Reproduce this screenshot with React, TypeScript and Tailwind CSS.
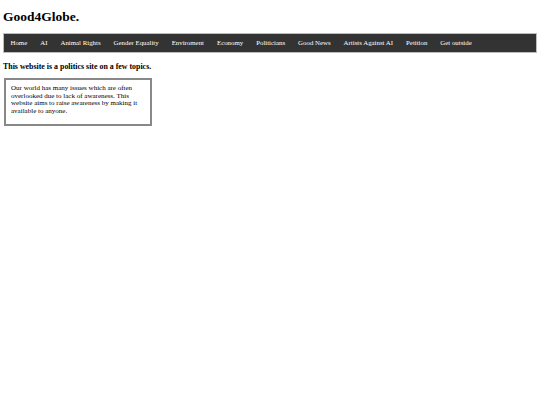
import React from 'react';

const navItems: string[] = [
  'Home',
  'AI',
  'Animal Rights',
  'Gender Equality',
  'Enviroment',
  'Economy',
  'Politicians',
  'Good News',
  'Artists Against AI',
  'Petition',
  'Get outside',
];

const App: React.FC = () => {
  return (
    <div className="min-h-[405px] bg-white text-black px-[3px]" style={{ fontFamily: '"Liberation Serif", "Times New Roman", serif' }}>
      <h1 className="pt-[8px] text-[13.5px] leading-[17px] font-bold">Good4Globe.</h1>

      <nav className="mt-[8px] h-[20px] bg-[#333333] border border-[#bdbdbd] flex items-center">
        {navItems.map((item) => (
          <a key={item} href="#" className="px-[6.5px] text-[6.85px] text-white whitespace-nowrap">
            {item}
          </a>
        ))}
      </nav>

      <h3 className="mt-[9px] text-[7.9px] leading-[10px] font-bold">This website is a politics site on a few topics.</h3>

      <div className="mt-[6px] ml-[1px] w-[148px] border-2 border-[#888888] pl-[5px] pr-[12px] pt-[5px] pb-[8px]">
        <p className="text-[7px] leading-[7.7px]">
          Our world has many issues which are often overlooked due to lack of awareness. This website aims to raise awareness by making it available to anyone.
        </p>
      </div>
    </div>
  );
};

export default App;
